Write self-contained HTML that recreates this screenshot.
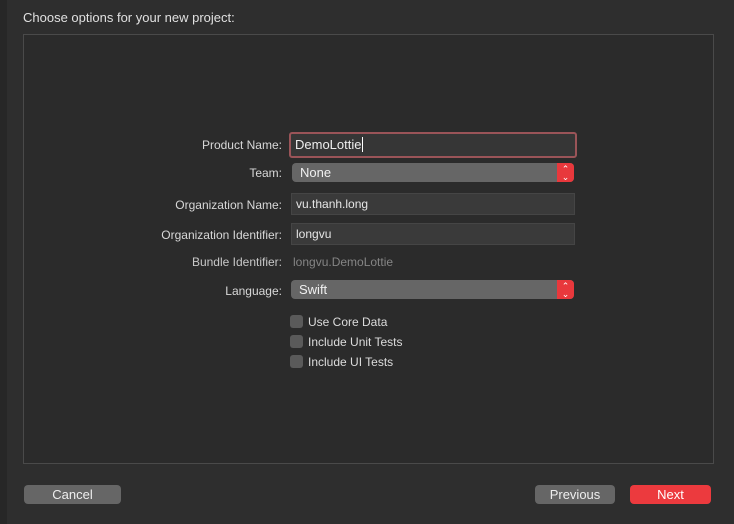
<!DOCTYPE html>
<html><head><style>
*{box-sizing:border-box;margin:0;padding:0}
body{width:734px;height:524px;background:#2e2e2e;font-family:"Liberation Sans",sans-serif;font-size:12px;color:#dcdcdc;position:relative;overflow:hidden}
.a{position:absolute}
.title{left:23px;top:10px;font-size:13px;color:#e0e0e0}
.panel{left:23px;top:34px;width:691px;height:430px;border:1px solid #4a4a4a;background:#2b2b2b}
.lbl{right:452px;text-align:right;color:#d8d8d8}
.fld{background:#3a3a3a;border:1px solid #454545;padding-left:4px;line-height:20px;color:#e6e6e6}
.pop{background:#666;border-radius:4px;padding-left:8px;line-height:19px;color:#f0f0f0;font-size:13px}
.pop .arr{position:absolute;right:0;top:0;width:17px;height:100%;background:#e8383c;border-radius:0 4px 4px 0;color:#fff;font-size:9px;text-align:center;line-height:8px;padding-top:2px}
.cb{width:13px;height:13px;background:#5a5a5a;border-radius:3px}
.btn{height:19px;border-radius:4px;background:#666;color:#eee;text-align:center;line-height:19px;font-size:13px}
</style></head><body>
<div class="a" style="left:0;top:0;width:7px;height:524px;background:#272727"></div>
<div class="a title">Choose options for your new project:</div>
<div class="a panel"></div>
<div class="a lbl" style="top:138px">Product Name:</div>
<div class="a" style="left:289px;top:132px;width:288px;height:26px;border:2px solid #9a5458;border-radius:3px;background:#363636;padding:3px 4px;font-size:13px;color:#eee">DemoLottie<span style="border-left:1px solid #fff;margin-left:1px"></span></div>
<div class="a lbl" style="top:166px">Team:</div>
<div class="a pop" style="left:292px;top:163px;width:282px;height:19px">None<div class="arr">⌃<br>⌄</div></div>
<div class="a lbl" style="top:198px">Organization Name:</div>
<div class="a fld" style="left:291px;top:193px;width:284px;height:22px">vu.thanh.long</div>
<div class="a lbl" style="top:228px">Organization Identifier:</div>
<div class="a fld" style="left:291px;top:223px;width:284px;height:22px">longvu</div>
<div class="a lbl" style="top:255px;color:#c8c8c8">Bundle Identifier:</div>
<div class="a" style="left:293px;top:255px;color:#858585">longvu.DemoLottie</div>
<div class="a lbl" style="top:284px">Language:</div>
<div class="a pop" style="left:291px;top:280px;width:283px;height:19px">Swift<div class="arr">⌃<br>⌄</div></div>
<div class="a cb" style="left:290px;top:315px"></div><div class="a" style="left:308px;top:315px">Use Core Data</div>
<div class="a cb" style="left:290px;top:335px"></div><div class="a" style="left:308px;top:335px">Include Unit Tests</div>
<div class="a cb" style="left:290px;top:355px"></div><div class="a" style="left:308px;top:355px">Include UI Tests</div>
<div class="a btn" style="left:24px;top:485px;width:97px">Cancel</div>
<div class="a btn" style="left:535px;top:485px;width:80px">Previous</div>
<div class="a btn" style="left:630px;top:485px;width:81px;background:#ec3a3e;color:#fff">Next</div>
</body></html>
